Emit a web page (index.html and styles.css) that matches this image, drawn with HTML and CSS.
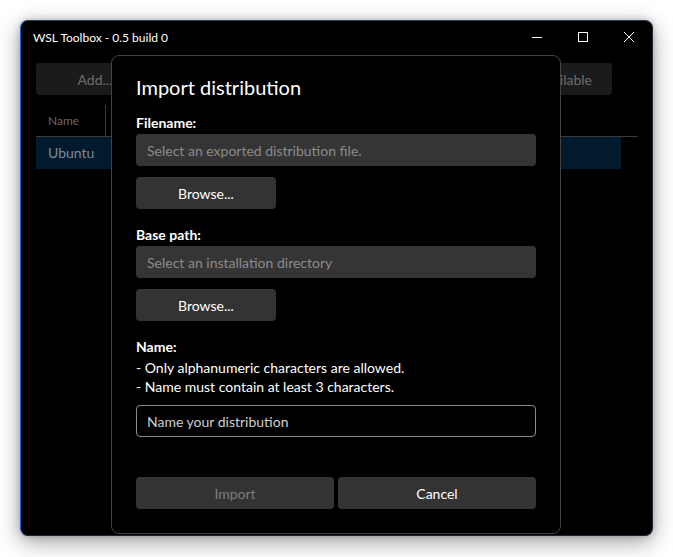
FILE: index.html
```html
<!DOCTYPE html>
<html lang="en">
<head>
<meta charset="utf-8">
<title>WSL Toolbox</title>
<link rel="stylesheet" href="styles.css">
</head>
<body>
<div class="window">
  <div class="titlebar">
    <span class="title">WSL Toolbox - 0.5 build 0</span>
    <div class="caption">
      <button class="cap" aria-label="Minimize">
        <svg width="10" height="10" viewBox="0 0 10 10"><path d="M0 5.5H10" stroke="#fff" stroke-width="1"/></svg>
      </button>
      <button class="cap" aria-label="Maximize">
        <svg width="10" height="10" viewBox="0 0 10 10"><rect x="0.5" y="0.5" width="9" height="9" fill="none" stroke="#fff" stroke-width="1"/></svg>
      </button>
      <button class="cap" aria-label="Close">
        <svg width="10" height="10" viewBox="0 0 10 10"><path d="M0 0L10 10M10 0L0 10" stroke="#fff" stroke-width="1"/></svg>
      </button>
    </div>
  </div>
  <div class="app">
    <div class="toolbar">
      <button class="appbtn add">Add...</button>
      <button class="appbtn avail">Show available</button>
    </div>
    <div class="grid">
      <div class="grid-head">
        <div class="col-name">Name</div>
        <div class="col-sep"></div>
      </div>
      <div class="grid-row selected"><span>Ubuntu</span></div>
    </div>
  </div>

  <div class="dialog">
    <h1 class="dlg-title">Import distribution</h1>
    <div class="field">
      <div class="label">Filename:</div>
      <div class="input filled">Select an exported distribution file.</div>
      <button class="btn browse">Browse...</button>
    </div>
    <div class="field">
      <div class="label">Base path:</div>
      <div class="input filled">Select an installation directory</div>
      <button class="btn browse">Browse...</button>
    </div>
    <div class="field name-field">
      <div class="label">Name:</div>
      <div class="hint">- Only alphanumeric characters are allowed.</div>
      <div class="hint">- Name must contain at least 3 characters.</div>
      <div class="input outlined">Name your distribution</div>
    </div>
    <div class="actions">
      <button class="btn disabled">Import</button>
      <button class="btn">Cancel</button>
    </div>
  </div>
</div>
</body>
</html>
```
FILE: styles.css
```css
* { box-sizing: border-box; }
html, body { margin: 0; padding: 0; }
body {
  background: #ffffff;
  width: 673px;
  height: 557px;
  overflow: hidden;
  font-family: "Lato", "Open Sans", sans-serif;
  color: #ffffff;
}
button { font-family: inherit; border: 0; margin: 0; padding: 0; }

.window {
  position: relative;
  margin: 20px 0 0 20px;
  width: 633px;
  height: 516px;
  background: #000;
  border: 1px solid #1d2633;
  border-top-color: #2a3a55;
  border-left-color: #1f5fc8;
  border-radius: 8px;
  box-shadow: 0 6px 22px rgba(0,0,0,0.38), 0 0 6px rgba(0,0,0,0.2);
  overflow: hidden;
}

.titlebar {
  height: 32px;
  display: flex;
  align-items: center;
  justify-content: space-between;
}
.title {
  padding-left: 12px;
  font-size: 12px;
  color: #fff;
}
.caption { display: flex; height: 32px; }
.cap {
  width: 46px;
  height: 32px;
  background: transparent;
  display: flex;
  align-items: center;
  justify-content: center;
}

.app { padding: 10px 14px 0 15px; }
.toolbar {
  display: flex;
  justify-content: space-between;
  padding-right: 26px;
}
.appbtn {
  height: 32px;
  background: #1b1b1b;
  color: #6d6d6d;
  font-size: 14px;
  border-radius: 4px;
}
.add { width: 118px; }
.avail { width: 130px; text-align: right; padding-right: 20px; }

.grid { margin-top: 10px; }
.grid-head {
  height: 32px;
  display: flex;
  align-items: center;
  border-bottom: 1px solid #3a3a3a;
}
.col-name {
  width: 69px;
  padding-left: 12px;
  font-size: 12px;
  color: #6a6a6a;
}
.col-sep { width: 1px; height: 31px; background: #3a3a3a; align-self: flex-end; }
.grid-row {
  height: 32px;
  width: 585px;
  display: flex;
  align-items: center;
  padding-left: 12px;
  padding-bottom: 1px;
  font-size: 14px;
  color: #7e8a95;
}
.selected { background: #011a2e; }

.dialog {
  position: absolute;
  left: 90px;
  top: 34px;
  width: 450px;
  height: 479px;
  background: #000;
  border: 1px solid #424242;
  border-radius: 8px;
  padding: 17px 24px 24px 24px;
  display: flex;
  flex-direction: column;
}
.dlg-title {
  margin: 0 0 12px 0;
  font-size: 20px;
  font-weight: 400;
  line-height: 28px;
  color: #fff;
}
.field { display: flex; flex-direction: column; align-items: flex-start; margin-bottom: 16px; }
.label {
  font-size: 14px;
  font-weight: 700;
  line-height: 20px;
  margin-bottom: 1px;
}
.input {
  width: 400px;
  height: 32px;
  border-radius: 4px;
  font-size: 14px;
  padding: 0 11px;
  display: flex;
  align-items: center;
}
.filled { background: #353535; color: #8b8b8b; }
.outlined { background: #000; border: 1px solid #8a8a8a; color: #cfcfcf; padding-left: 10px; margin-top: 9px; }
.btn {
  height: 32px;
  border-radius: 4px;
  background: #333333;
  color: #fff;
  font-size: 14px;
}
.browse { width: 140px; margin-top: 11px; }
.hint { font-size: 14px; line-height: 19px; }
.name-field { margin-bottom: 0; }
.actions {
  margin-top: auto;
  display: grid;
  grid-template-columns: 1fr 1fr;
  gap: 4px;
}
.disabled { color: #7d7d7d; }
```
